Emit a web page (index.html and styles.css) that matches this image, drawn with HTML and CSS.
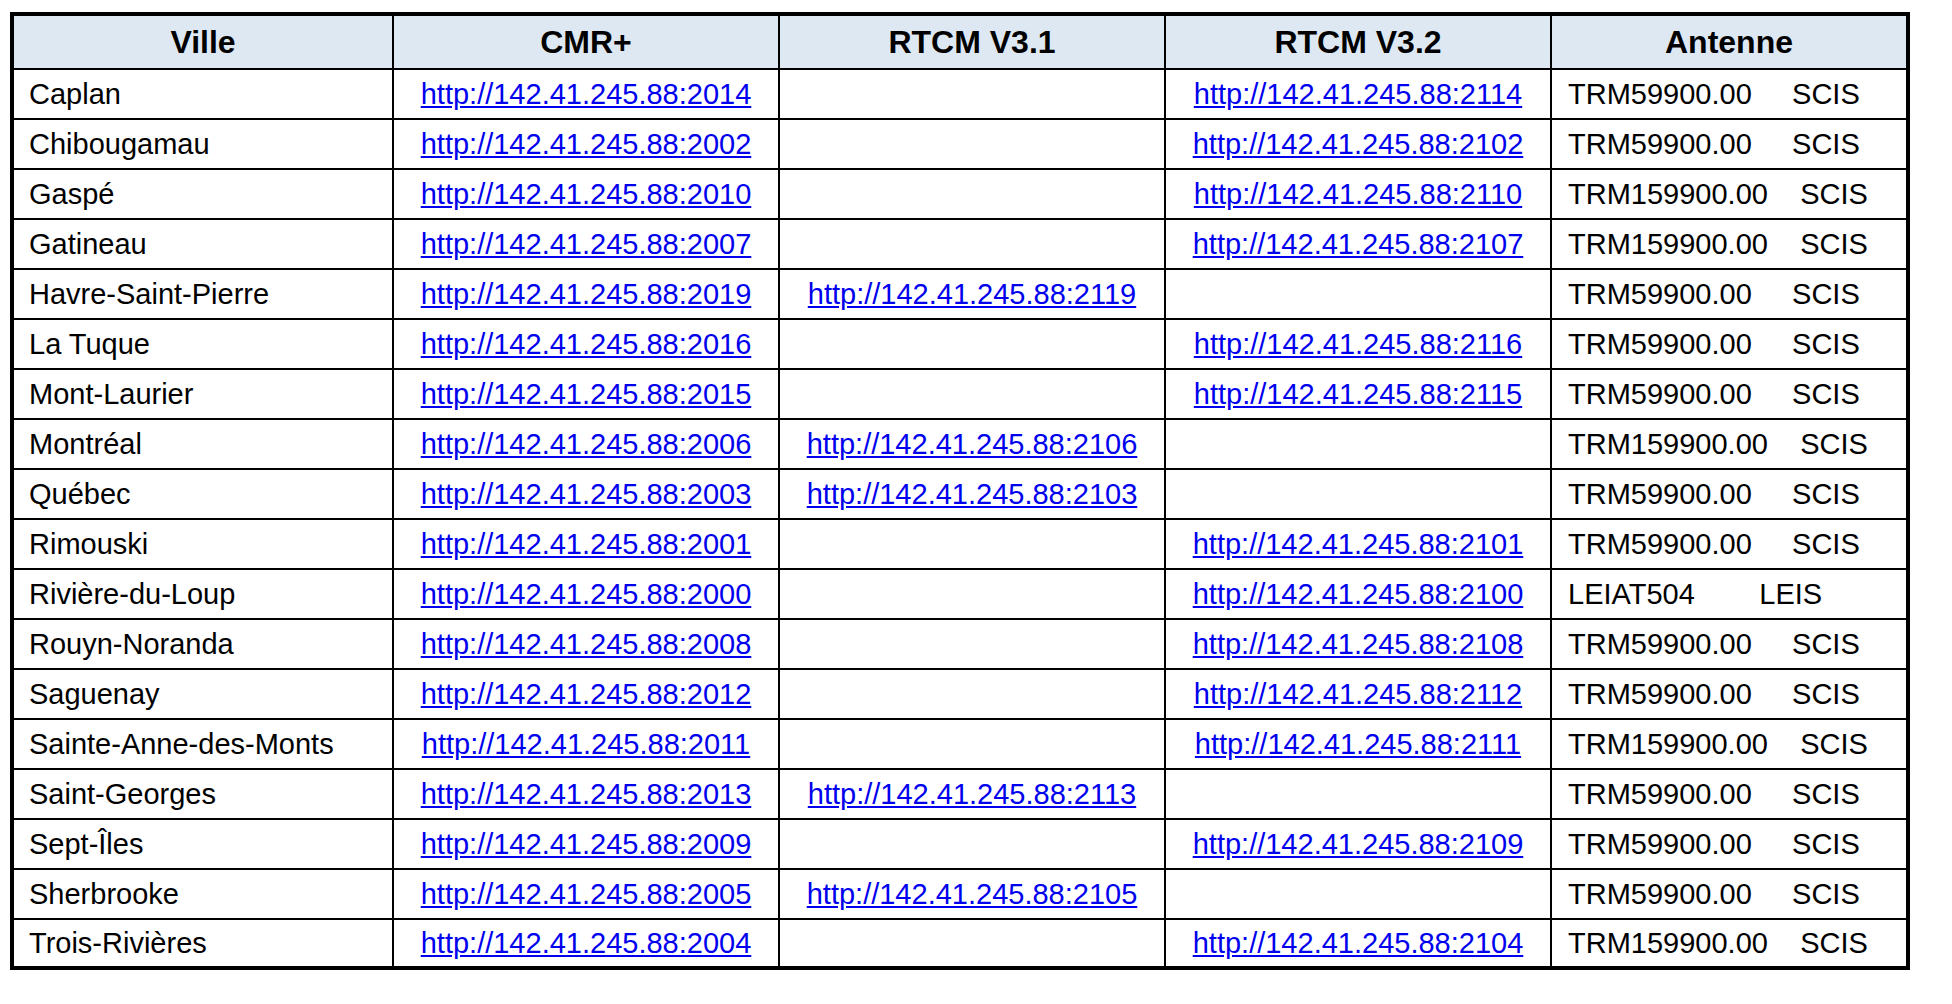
FILE: index.html
```html
<!DOCTYPE html>
<html lang="fr">
<head>
<meta charset="utf-8">
<title>Stations</title>
<link rel="stylesheet" href="styles.css">
</head>
<body>
<table class="stations">
  <thead>
    <tr>
      <th class="c-ville">Ville</th>
      <th class="c-link">CMR+</th>
      <th class="c-link">RTCM V3.1</th>
      <th class="c-link">RTCM V3.2</th>
      <th class="c-ant">Antenne</th>
    </tr>
  </thead>
  <tbody>
    <tr><td class="ville">Caplan</td><td class="lnk"><a href="#">http://142.41.245.88:2014</a></td><td class="lnk"></td><td class="lnk"><a href="#">http://142.41.245.88:2114</a></td><td class="ant">TRM59900.00     SCIS</td></tr>
    <tr><td class="ville">Chibougamau</td><td class="lnk"><a href="#">http://142.41.245.88:2002</a></td><td class="lnk"></td><td class="lnk"><a href="#">http://142.41.245.88:2102</a></td><td class="ant">TRM59900.00     SCIS</td></tr>
    <tr><td class="ville">Gaspé</td><td class="lnk"><a href="#">http://142.41.245.88:2010</a></td><td class="lnk"></td><td class="lnk"><a href="#">http://142.41.245.88:2110</a></td><td class="ant">TRM159900.00    SCIS</td></tr>
    <tr><td class="ville">Gatineau</td><td class="lnk"><a href="#">http://142.41.245.88:2007</a></td><td class="lnk"></td><td class="lnk"><a href="#">http://142.41.245.88:2107</a></td><td class="ant">TRM159900.00    SCIS</td></tr>
    <tr><td class="ville">Havre-Saint-Pierre</td><td class="lnk"><a href="#">http://142.41.245.88:2019</a></td><td class="lnk"><a href="#">http://142.41.245.88:2119</a></td><td class="lnk"></td><td class="ant">TRM59900.00     SCIS</td></tr>
    <tr><td class="ville">La Tuque</td><td class="lnk"><a href="#">http://142.41.245.88:2016</a></td><td class="lnk"></td><td class="lnk"><a href="#">http://142.41.245.88:2116</a></td><td class="ant">TRM59900.00     SCIS</td></tr>
    <tr><td class="ville">Mont-Laurier</td><td class="lnk"><a href="#">http://142.41.245.88:2015</a></td><td class="lnk"></td><td class="lnk"><a href="#">http://142.41.245.88:2115</a></td><td class="ant">TRM59900.00     SCIS</td></tr>
    <tr><td class="ville">Montréal</td><td class="lnk"><a href="#">http://142.41.245.88:2006</a></td><td class="lnk"><a href="#">http://142.41.245.88:2106</a></td><td class="lnk"></td><td class="ant">TRM159900.00    SCIS</td></tr>
    <tr><td class="ville">Québec</td><td class="lnk"><a href="#">http://142.41.245.88:2003</a></td><td class="lnk"><a href="#">http://142.41.245.88:2103</a></td><td class="lnk"></td><td class="ant">TRM59900.00     SCIS</td></tr>
    <tr><td class="ville">Rimouski</td><td class="lnk"><a href="#">http://142.41.245.88:2001</a></td><td class="lnk"></td><td class="lnk"><a href="#">http://142.41.245.88:2101</a></td><td class="ant">TRM59900.00     SCIS</td></tr>
    <tr><td class="ville">Rivière-du-Loup</td><td class="lnk"><a href="#">http://142.41.245.88:2000</a></td><td class="lnk"></td><td class="lnk"><a href="#">http://142.41.245.88:2100</a></td><td class="ant">LEIAT504        LEIS</td></tr>
    <tr><td class="ville">Rouyn-Noranda</td><td class="lnk"><a href="#">http://142.41.245.88:2008</a></td><td class="lnk"></td><td class="lnk"><a href="#">http://142.41.245.88:2108</a></td><td class="ant">TRM59900.00     SCIS</td></tr>
    <tr><td class="ville">Saguenay</td><td class="lnk"><a href="#">http://142.41.245.88:2012</a></td><td class="lnk"></td><td class="lnk"><a href="#">http://142.41.245.88:2112</a></td><td class="ant">TRM59900.00     SCIS</td></tr>
    <tr><td class="ville">Sainte-Anne-des-Monts</td><td class="lnk"><a href="#">http://142.41.245.88:2011</a></td><td class="lnk"></td><td class="lnk"><a href="#">http://142.41.245.88:2111</a></td><td class="ant">TRM159900.00    SCIS</td></tr>
    <tr><td class="ville">Saint-Georges</td><td class="lnk"><a href="#">http://142.41.245.88:2013</a></td><td class="lnk"><a href="#">http://142.41.245.88:2113</a></td><td class="lnk"></td><td class="ant">TRM59900.00     SCIS</td></tr>
    <tr><td class="ville">Sept-Îles</td><td class="lnk"><a href="#">http://142.41.245.88:2009</a></td><td class="lnk"></td><td class="lnk"><a href="#">http://142.41.245.88:2109</a></td><td class="ant">TRM59900.00     SCIS</td></tr>
    <tr><td class="ville">Sherbrooke</td><td class="lnk"><a href="#">http://142.41.245.88:2005</a></td><td class="lnk"><a href="#">http://142.41.245.88:2105</a></td><td class="lnk"></td><td class="ant">TRM59900.00     SCIS</td></tr>
    <tr><td class="ville">Trois-Rivières</td><td class="lnk"><a href="#">http://142.41.245.88:2004</a></td><td class="lnk"></td><td class="lnk"><a href="#">http://142.41.245.88:2104</a></td><td class="ant">TRM159900.00    SCIS</td></tr>
  </tbody>
</table>
</body>
</html>
```

FILE: styles.css
```css
html, body {
  background: #ffffff;
}

body {
  margin: 0;
  padding: 12px 0 0 10px;
  font-family: "Liberation Sans", Arial, Helvetica, sans-serif;
  color: #000000;
}

.stations {
  box-sizing: border-box;
  width: 1900px;
  table-layout: fixed;
  border-collapse: separate;
  border-spacing: 0;
  border: 4px solid #000000;
}

.stations th,
.stations td {
  box-sizing: border-box;
  padding: 0;
  border-right: 2px solid #000000;
  border-bottom: 2px solid #000000;
  vertical-align: middle;
  white-space: nowrap;
  overflow: hidden;
}

.stations th:last-child,
.stations td:last-child {
  border-right: none;
}

.stations tbody tr:last-child td {
  border-bottom: none;
}

.stations th {
  height: 54px;
  background: #dee8f3;
  font-size: 32px;
  font-weight: bold;
  text-align: center;
}

.stations td {
  height: 50px;
  font-size: 29px;
}

.stations tbody tr:last-child td {
  height: 46px;
}

.c-ville { width: 380px; }
.c-link { width: 386px; }
.c-ant { width: 354px; }

.stations td.ville {
  padding-left: 15px;
  text-align: left;
}

.stations td.lnk {
  text-align: center;
}

.lnk a {
  color: #0000ee;
  text-decoration: underline;
}

.stations td.ant {
  padding-left: 16px;
  text-align: left;
  white-space: pre;
}
```
